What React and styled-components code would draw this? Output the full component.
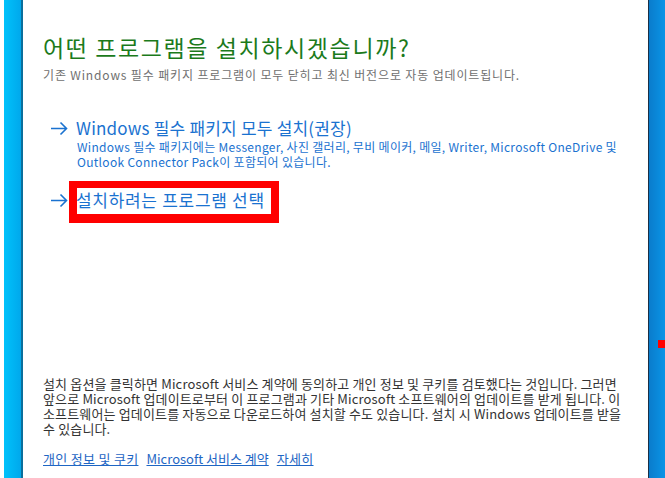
import styled, { createGlobalStyle } from 'styled-components';

const GlobalStyle = createGlobalStyle`
  html, body {
    margin: 0;
    padding: 0;
    background: #ffffff;
  }
  body {
    font-family: "Noto Sans CJK KR", "Noto Sans", sans-serif;
  }
`;

const Window = styled.div`
  display: flex;
  width: 665px;
  height: 478px;
  overflow: hidden;
  background: #ffffff;
`;

const LeftRail = styled.div`
  width: 17px;
  margin-left: 4px;
  flex-shrink: 0;
  background: linear-gradient(to right, #00c2fb, #00a8ec);
  border-right: 2px solid #0a6f9c;
`;

const RightRail = styled.div`
  width: 16px;
  flex-shrink: 0;
  position: relative;
  background: linear-gradient(to right, #0a7ccc, #0a94e6);
  border-left: 1px solid #1b2f45;
`;

const Marker = styled.span`
  position: absolute;
  left: 9px;
  top: 340px;
  width: 7px;
  height: 8px;
  background: #ff0000;
`;

const Panel = styled.main`
  flex: 1;
  display: flex;
  flex-direction: column;
  padding: 33px 20px 11px 20px;
`;

const Title = styled.h1`
  margin: 0;
  font-size: 23px;
  line-height: 28px;
  font-weight: 400;
  letter-spacing: 1.6px;
  color: #1b7a1b;
`;

const Subtitle = styled.p`
  margin: 6px 0 0;
  font-size: 12px;
  line-height: 16px;
  letter-spacing: 0.85px;
  color: #707070;
`;

const Options = styled.div`
  display: flex;
  flex-direction: column;
  gap: 20px;
  margin-top: 34px;
`;

const Option = styled.div`
  display: grid;
  grid-template-columns: 18px 1fr;
  column-gap: 8px;
  padding-left: 7px;
`;

const Arrow = styled.svg`
  width: 18px;
  height: 22px;
  display: block;
`;

const OptionTitle = styled.div`
  position: relative;
  align-self: start;
  justify-self: start;
  font-size: 17px;
  line-height: 22px;
  letter-spacing: ${(p) => (p.$wide ? '0.7px' : '0.2px')};
  color: #1a72d0;
`;

const Highlight = styled.span`
  position: absolute;
  left: -7px;
  top: -8px;
  width: 210px;
  height: 42px;
  box-sizing: border-box;
  border: 8px solid #ff0000;
  border-top-width: 7px;
  border-bottom-width: 9px;
  pointer-events: none;
`;

const OptionDesc = styled.p`
  grid-column: 2;
  margin: 0;
  padding-left: 1px;
  font-size: 12px;
  line-height: 15px;
  letter-spacing: 0.3px;
  color: #1a72d0;
`;

const Footer = styled.footer`
  margin-top: auto;
  display: flex;
  flex-direction: column;
  gap: 15px;
`;

const Legal = styled.p`
  margin: 0;
  font-size: 13px;
  line-height: 15px;
  letter-spacing: 0.15px;
  color: #333333;
`;

const Links = styled.div`
  display: flex;
  gap: 8px;
`;

const Link = styled.a`
  font-size: 13px;
  line-height: 16px;
  letter-spacing: ${(p) => (p.$latin ? '0px' : '0.3px')};
  color: #1e66c4;
  text-decoration: underline;
  cursor: pointer;
`;

const ArrowIcon = () => (
  <Arrow viewBox="0 0 18 22">
    <path d="M1 11.5H16.5M10.5 5.5L16.5 11.5L10.5 17.5" fill="none" stroke="#1a72d0" strokeWidth="1.6" />
  </Arrow>
);

export default function App() {
  return (
    <>
      <GlobalStyle />
      <Window>
        <LeftRail />
        <Panel>
          <Title>어떤 프로그램을 설치하시겠습니까?</Title>
          <Subtitle>기존 Windows 필수 패키지 프로그램이 모두 닫히고 최신 버전으로 자동 업데이트됩니다.</Subtitle>
          <Options>
            <Option>
              <ArrowIcon />
              <OptionTitle>Windows 필수 패키지 모두 설치(권장)</OptionTitle>
              <OptionDesc>
                Windows 필수 패키지에는 Messenger, 사진 갤러리, 무비 메이커, 메일, Writer, Microsoft OneDrive 및
                <br />
                Outlook Connector Pack이 포함되어 있습니다.
              </OptionDesc>
            </Option>
            <Option>
              <ArrowIcon />
              <OptionTitle $wide>
                설치하려는 프로그램 선택
                <Highlight />
              </OptionTitle>
            </Option>
          </Options>
          <Footer>
            <Legal>
              설치 옵션을 클릭하면 Microsoft 서비스 계약에 동의하고 개인 정보 및 쿠키를 검토했다는 것입니다. 그러면
              <br />
              앞으로 Microsoft 업데이트로부터 이 프로그램과 기타 Microsoft 소프트웨어의 업데이트를 받게 됩니다. 이
              <br />
              소프트웨어는 업데이트를 자동으로 다운로드하여 설치할 수도 있습니다. 설치 시 Windows 업데이트를 받을
              <br />
              수 있습니다.
            </Legal>
            <Links>
              <Link>개인 정보 및 쿠키</Link>
              <Link $latin>Microsoft 서비스 계약</Link>
              <Link>자세히</Link>
            </Links>
          </Footer>
        </Panel>
        <RightRail>
          <Marker />
        </RightRail>
      </Window>
    </>
  );
}
